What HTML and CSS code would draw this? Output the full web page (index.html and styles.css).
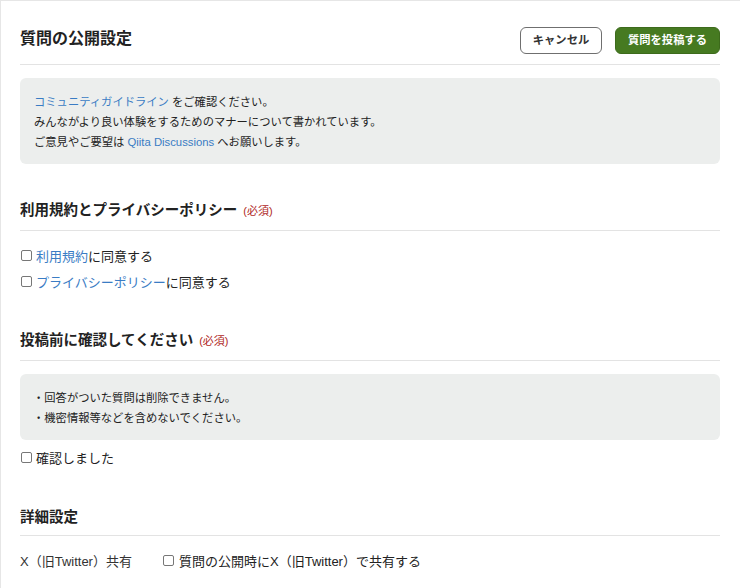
FILE: index.html
```html
<!DOCTYPE html>
<html lang="ja">
<head>
<meta charset="utf-8">
<link rel="stylesheet" href="styles.css">
</head>
<body>
<div class="page">
  <header class="header">
    <h1 class="title">質問の公開設定</h1>
    <div class="actions">
      <button class="btn btn-cancel">キャンセル</button>
      <button class="btn btn-primary">質問を投稿する</button>
    </div>
  </header>

  <div class="note note-first">
    <p><a class="link" href="#">コミュニティガイドライン</a> をご確認ください。</p>
    <p>みんながより良い体験をするためのマナーについて書かれています。</p>
    <p>ご意見やご要望は <a class="link" href="#">Qiita Discussions</a> へお願いします。</p>
  </div>

  <section class="section s1">
    <h2 class="sec-title">利用規約とプライバシーポリシー <span class="req">(必須)</span></h2>
    <label class="check first"><input type="checkbox"><span><a class="link" href="#">利用規約</a>に同意する</span></label>
    <label class="check"><input type="checkbox"><span><a class="link" href="#">プライバシーポリシー</a>に同意する</span></label>
  </section>

  <section class="section s2">
    <h2 class="sec-title">投稿前に確認してください <span class="req">(必須)</span></h2>
    <div class="note note-list">
      <p>・回答がついた質問は削除できません。</p>
      <p>・機密情報等などを含めないでください。</p>
    </div>
    <label class="check after-note"><input type="checkbox"><span>確認しました</span></label>
  </section>

  <section class="section s3">
    <h2 class="sec-title">詳細設定</h2>
    <div class="setting-row">
      <span class="setting-label">X（旧Twitter）共有</span>
      <label class="check inline"><input type="checkbox"><span>質問の公開時にX（旧Twitter）で共有する</span></label>
    </div>
  </section>
</div>
</body>
</html>
```

FILE: styles.css
```css
* { box-sizing: border-box; }
html, body { margin: 0; padding: 0; background: #fff; }
body {
  font-family: "Liberation Sans", "Noto Sans CJK JP", sans-serif;
  color: #333;
  overflow: hidden;
}
.page {
  width: 760px;
  min-height: 600px;
  border-top: 1px solid #e6e6e6;
  border-left: 1px solid #e6e6e6;
  padding: 0 39px 0 19px;
}
.page > * { width: 700px; }
.header {
  display: flex;
  align-items: center;
  justify-content: space-between;
  padding: 26px 0 10px;
  border-bottom: 1px solid #e3e3e3;
}
.title {
  margin: 0;
  font-size: 16px;
  font-weight: 700;
  line-height: 22px;
  color: #222;
  margin-top: -4px;
}
.actions { display: flex; gap: 13px; }
.btn {
  height: 27px;
  padding: 0;
  font-family: inherit;
  font-size: 11.3px;
  font-weight: 700;
  border-radius: 6px;
  line-height: 25px;
  white-space: nowrap;
  text-align: center;
  cursor: pointer;
}
.btn-cancel {
  width: 82px;
  background: #fff;
  color: #333;
  border: 1px solid #6f6f6f;
}
.btn-primary {
  width: 105px;
  background: #467a21;
  color: #fff;
  border: 1px solid #3d6b1c;
}
.note {
  background: #eceeed;
  border-radius: 6px;
  padding: 14px 14px 12px;
  font-size: 11.3px;
  line-height: 20px;
  color: #222;
}
.note p { margin: 0; }
.note-first { margin-top: 13px; }
.link { color: #3a7cc4; text-decoration: none; }
.section { margin-top: 35px; }
.s2 { margin-top: 35px; }
.s3 { margin-top: 36px; }
.sec-title {
  margin: 0;
  font-size: 14.5px;
  font-weight: 700;
  line-height: 22px;
  padding-bottom: 8px;
  border-bottom: 1px solid #e3e3e3;
  color: #222;
}
.s3 .sec-title { padding-bottom: 7px; }
.req {
  font-size: 11px;
  font-weight: 400;
  color: #b0271e;
  margin-left: 2px;
}
.check {
  display: flex;
  align-items: center;
  height: 26px;
  font-size: 13px;
  color: #222;
}
.check.first { margin-top: 11px; }
.check input {
  appearance: none;
  -webkit-appearance: none;
  width: 11px;
  height: 11px;
  margin: 0 4px 0 1px;
  border: 1px solid #777;
  border-radius: 2px;
  background: #fff;
  flex: none;
}
.note-list { margin-top: 13px; padding-left: 13px; }
.check.after-note { margin-top: 4px; }
.setting-row {
  display: flex;
  align-items: center;
  height: 26px;
  margin-top: 11px;
  font-size: 13px;
}
.setting-label { width: 143px; color: #333; }
.check.inline { height: 26px; }
.check.inline input { margin-left: 0; margin-right: 5px; }
```
